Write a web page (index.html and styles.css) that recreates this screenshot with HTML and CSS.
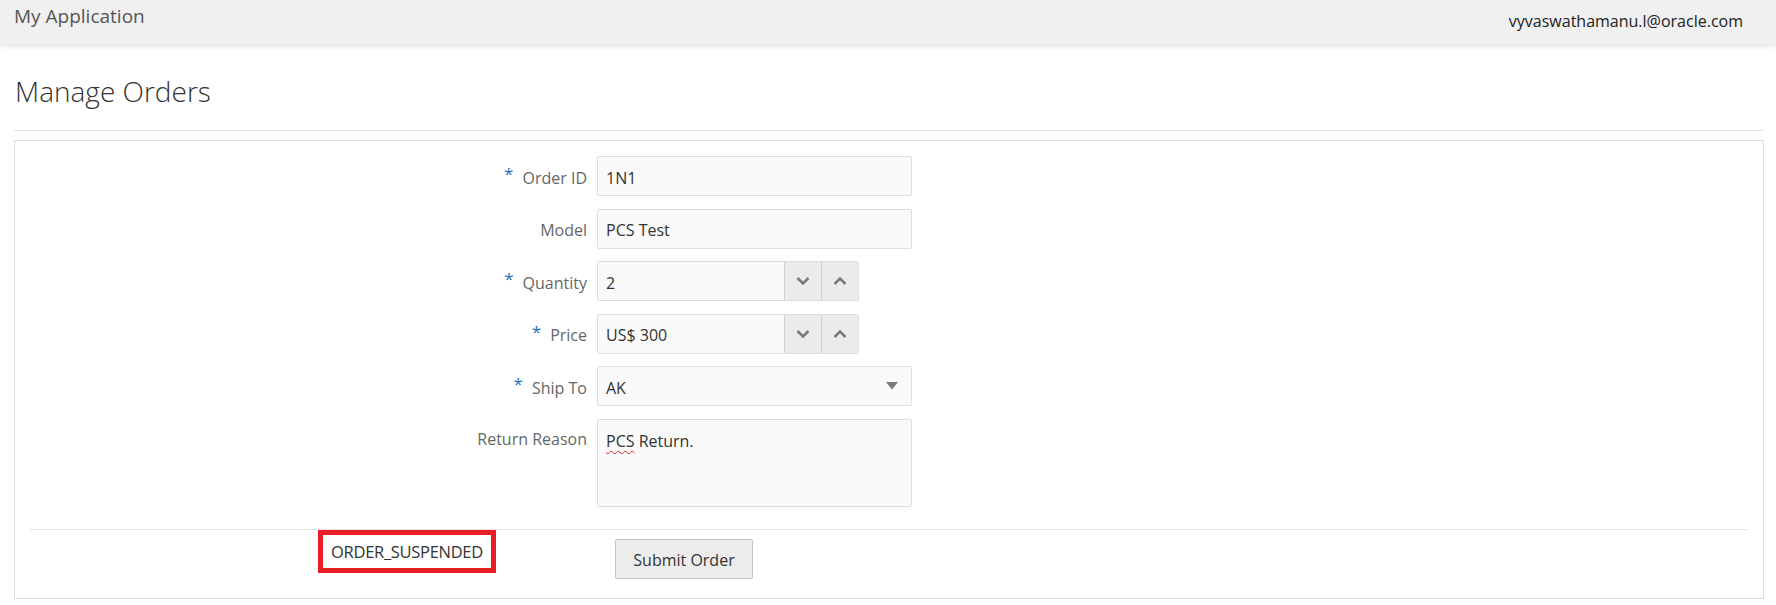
FILE: index.html
```html
<!DOCTYPE html>
<html lang="en">
<head>
<meta charset="utf-8">
<title>Manage Orders</title>
<link rel="stylesheet" href="styles.css">
</head>
<body>
<header class="app-header">
  <div class="app-title">My Application</div>
  <div class="app-user">vyvaswathamanu.l@oracle.com</div>
</header>
<main class="page">
  <h1 class="page-title">Manage Orders</h1>
  <section class="panel">
    <div class="form-grid">
      <label class="field-label"><span class="req">*</span>Order ID</label>
      <div class="input text-input">1N1</div>

      <label class="field-label">Model</label>
      <div class="input text-input">PCS Test</div>

      <label class="field-label"><span class="req">*</span>Quantity</label>
      <div class="input spinner">
        <span class="spin-value">2</span>
        <span class="spin-btn"><svg width="14" height="10" viewBox="0 0 14 10"><path d="M1.5 2 L7 7.5 L12.5 2" fill="none" stroke="#7a7a7a" stroke-width="2.6"/></svg></span>
        <span class="spin-btn"><svg width="14" height="10" viewBox="0 0 14 10"><path d="M1.5 8 L7 2.5 L12.5 8" fill="none" stroke="#7a7a7a" stroke-width="2.6"/></svg></span>
      </div>

      <label class="field-label"><span class="req">*</span>Price</label>
      <div class="input spinner">
        <span class="spin-value">US$ 300</span>
        <span class="spin-btn"><svg width="14" height="10" viewBox="0 0 14 10"><path d="M1.5 2 L7 7.5 L12.5 2" fill="none" stroke="#7a7a7a" stroke-width="2.6"/></svg></span>
        <span class="spin-btn"><svg width="14" height="10" viewBox="0 0 14 10"><path d="M1.5 8 L7 2.5 L12.5 8" fill="none" stroke="#7a7a7a" stroke-width="2.6"/></svg></span>
      </div>

      <label class="field-label"><span class="req">*</span>Ship To</label>
      <div class="input select">
        <span class="select-value">AK</span>
        <svg class="select-arrow" width="12" height="8" viewBox="0 0 12 8"><path d="M0 0 H12 L6 7.5 Z" fill="#7a7a7a"/></svg>
      </div>

      <label class="field-label label-top">Return Reason</label>
      <div class="input textarea"><span class="spell">PCS</span> Return.</div>
    </div>

    <div class="form-footer">
      <div class="status-box">ORDER_SUSPENDED</div>
      <button class="submit-btn" type="button">Submit Order</button>
    </div>
  </section>
</main>
</body>
</html>
```

FILE: styles.css
```css
* { box-sizing: border-box; }

body {
  margin: 0;
  font-family: "Open Sans", "Noto Sans", "Liberation Sans", sans-serif;
  color: #333;
  background: #fff;
}

.app-header {
  height: 45px;
  background: #f0f0f0;
  box-shadow: 0 2px 4px rgba(0, 0, 0, 0.10);
  display: flex;
  justify-content: space-between;
  align-items: flex-start;
  padding: 0 33px 0 14px;
}

.app-title {
  font-size: 19px;
  line-height: 26px;
  padding-top: 3px;
  color: #555;
}

.app-user {
  font-size: 16px;
  line-height: 22px;
  padding-top: 10px;
  color: #222;
}

.page {
  padding: 0 12px 0 14px;
}

.page-title {
  margin: 27px 0 0;
  padding: 0 0 20px 1px;
  font-size: 28px;
  line-height: 38px;
  font-weight: 300;
  color: #333;
  border-bottom: 1px solid #e2e2e2;
}

.panel {
  margin-top: 9px;
  border: 1px solid #dcdcdc;
  padding: 15px 15px 0;
  height: 459px;
}

.form-grid {
  display: grid;
  grid-template-columns: 557px 315px;
  column-gap: 10px;
  row-gap: 12.5px;
}

.field-label {
  display: flex;
  justify-content: flex-end;
  align-items: center;
  font-size: 16px;
  color: #666;
  padding-top: 3px;
}

.label-top {
  align-items: flex-start;
  padding-top: 9px;
}

.req {
  color: #1f6fbf;
  font-size: 17px;
  margin-right: 9px;
  align-self: flex-start;
  padding-top: 3px;
}

.input {
  height: 40px;
  border: 1px solid #dedede;
  border-radius: 2px;
  background: #fafafa;
  font-size: 16px;
  color: #333;
}

.text-input {
  display: flex;
  align-items: center;
  padding: 3px 8px 0;
}

.spinner {
  width: 262px;
  display: flex;
  align-items: stretch;
}

.spin-value {
  flex: 1;
  display: flex;
  align-items: center;
  padding: 3px 8px 0;
}

.spin-btn {
  width: 37px;
  background: #ebebeb;
  border-left: 1px solid #cfcfcf;
  display: flex;
  align-items: center;
  justify-content: center;
}

.spin-btn:last-child {
  border-radius: 0 2px 2px 0;
}

.select {
  display: flex;
  align-items: center;
  justify-content: space-between;
  padding: 3px 13px 0 8px;
}

.select-arrow {
  margin-top: -3px;
}

.textarea {
  height: 88px;
  padding: 9px 8px 0;
  line-height: 24px;
}

.spell {
  text-decoration: underline wavy #e0201f;
  text-decoration-thickness: 1px;
  text-underline-offset: 3px;
}

.form-footer {
  margin-top: 22px;
  border-top: 1px solid #e2e2e2;
  display: flex;
  align-items: flex-start;
  padding-left: 288px;
}

.status-box {
  width: 178px;
  height: 43px;
  border: 5px solid #e81d25;
  display: flex;
  align-items: center;
  justify-content: center;
  font-size: 16.5px;
  color: #333;
  letter-spacing: -0.3px;
}

.submit-btn {
  margin: 9px 0 0 119px;
  width: 138px;
  height: 40px;
  background: #ececec;
  border: 1px solid #c6c6c6;
  border-radius: 2px;
  font-family: inherit;
  font-size: 16px;
  color: #333;
  padding: 2px 0 0;
}
```
